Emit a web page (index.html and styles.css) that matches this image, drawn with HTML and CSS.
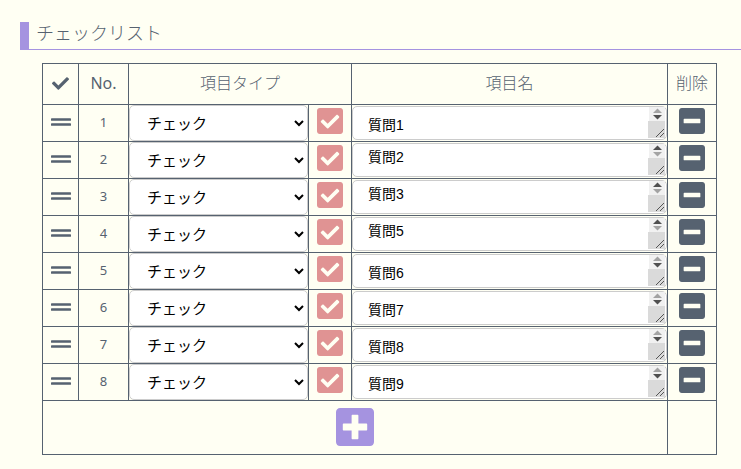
FILE: index.html
```html
<!DOCTYPE html>
<html lang="ja">
<head>
    <meta charset="UTF-8">
    <meta name="viewport" content="width=device-width, initial-scale=1.0">
    <title>チェックリスト</title>
    <link rel="stylesheet" href="styles.css">
</head>
<body>
    <svg class="icon-defs" aria-hidden="true">
        <symbol id="icon-check" viewBox="0 0 512 512"><path d="M173.898 439.404l-166.4-166.4c-9.997-9.997-9.997-26.206 0-36.204l36.203-36.204c9.997-9.998 26.207-9.998 36.204 0L192 312.69 432.095 72.596c9.997-9.997 26.207-9.997 36.204 0l36.203 36.204c9.997 9.997 9.997 26.206 0 36.204l-294.4 294.401c-9.998 9.997-26.207 9.997-36.204-.001z"/></symbol>
        <symbol id="icon-grip" viewBox="0 0 512 512"><path d="M496 288H16c-8.800 0-16 7.200-16 16v32c0 8.800 7.200 16 16 16h480c8.800 0 16-7.200 16-16v-32c0-8.800-7.200-16-16-16zm0-128H16c-8.800 0-16 7.200-16 16v32c0 8.800 7.200 16 16 16h480c8.800 0 16-7.200 16-16v-32c0-8.800-7.200-16-16-16z"/></symbol>
        <symbol id="icon-check-square" viewBox="0 32 448 448"><path d="M400 480H48c-26.51 0-48-21.49-48-48V80c0-26.51 21.49-48 48-48h352c26.51 0 48 21.49 48 48v352c0 26.51-21.49 48-48 48zm-204.686-98.059l184-184c6.248-6.248 6.248-16.379 0-22.627l-22.627-22.627c-6.248-6.248-16.379-6.249-22.628 0L184 302.745l-70.059-70.059c-6.248-6.248-16.379-6.248-22.628 0l-22.627 22.627c-6.248 6.248-6.248 16.379 0 22.627l104 104c6.249 6.25 16.379 6.25 22.628.001z"/></symbol>
        <symbol id="icon-minus-square" viewBox="0 32 448 448"><path d="M400 32H48C21.5 32 0 53.5 0 80v352c0 26.5 21.5 48 48 48h352c26.5 0 48-21.5 48-48V80c0-26.5-21.5-48-48-48zM92 296c-6.600 0-12-5.400-12-12v-56c0-6.600 5.400-12 12-12h264c6.600 0 12 5.400 12 12v56c0 6.600-5.400 12-12 12H92z"/></symbol>
        <symbol id="icon-plus-square" viewBox="0 32 448 448"><path d="M400 32H48C21.500 32 0 53.500 0 80v352c0 26.500 21.500 48 48 48h352c26.500 0 48-21.500 48-48V80c0-26.500-21.500-48-48-48zm-32 252c0 6.600-5.400 12-12 12h-92v92c0 6.600-5.400 12-12 12h-56c-6.600 0-12-5.400-12-12v-92H92c-6.600 0-12-5.400-12-12v-56c0-6.600 5.400-12 12-12h92v-92c0-6.600 5.400-12 12-12h56c6.600 0 12 5.400 12 12v92h92c6.600 0 12 5.400 12 12v56z"/></symbol>
        <!-- 入力欄のスクロール矢印とリサイズつまみ -->
        <symbol id="icon-scroll" viewBox="0 0 17 31">
            <path fill="#f1f1f1" d="M1 0h16v14H1z"/>
            <path fill="#dadada" d="M0 14h17v17H0z"/>
            <path class="arrow-up" d="M5 6l4.500-4.500 4.500 4.500z"/>
            <path class="arrow-down" d="M5 8h9l-4.500 4.500z"/>
            <path fill="none" stroke="#555" d="M8 30l8-8M12 30l4-4"/>
        </symbol>
    </svg>

    <h1 class="section-title">チェックリスト</h1>

    <form class="checklist">
        <table class="item-table">
            <colgroup>
                <col class="col-grip">
                <col class="col-no">
                <col class="col-type">
                <col class="col-icon">
                <col class="col-name">
                <col class="col-delete">
            </colgroup>
            <thead>
                <tr>
                    <th aria-label="並べ替え"><svg class="icon icon-head"><use href="#icon-check"/></svg></th>
                    <th class="no">No.</th>
                    <th colspan="2">項目タイプ</th>
                    <th>項目名</th>
                    <th>削除</th>
                </tr>
            </thead>
            <tbody>
                <tr>
                    <td><svg class="icon icon-grip"><use href="#icon-grip"/></svg></td>
                    <td class="no">1</td>
                    <td class="field"><select class="type-select" aria-label="項目タイプ 1"><option>チェック</option></select></td>
                    <td><svg class="icon icon-type"><use href="#icon-check-square"/></svg></td>
                    <td class="field"><div class="name-box"><textarea class="name-input" aria-label="項目名 1">質問1</textarea><svg class="scroll"><use href="#icon-scroll"/></svg></div></td>
                    <td><button type="button" class="btn-icon" aria-label="削除 1"><svg class="icon icon-delete"><use href="#icon-minus-square"/></svg></button></td>
                </tr>
                <tr>
                    <td><svg class="icon icon-grip"><use href="#icon-grip"/></svg></td>
                    <td class="no">2</td>
                    <td class="field"><select class="type-select" aria-label="項目タイプ 2"><option>チェック</option></select></td>
                    <td><svg class="icon icon-type"><use href="#icon-check-square"/></svg></td>
                    <td class="field"><div class="name-box scrolled"><textarea class="name-input" aria-label="項目名 2">質問2</textarea><svg class="scroll"><use href="#icon-scroll"/></svg></div></td>
                    <td><button type="button" class="btn-icon" aria-label="削除 2"><svg class="icon icon-delete"><use href="#icon-minus-square"/></svg></button></td>
                </tr>
                <tr>
                    <td><svg class="icon icon-grip"><use href="#icon-grip"/></svg></td>
                    <td class="no">3</td>
                    <td class="field"><select class="type-select" aria-label="項目タイプ 3"><option>チェック</option></select></td>
                    <td><svg class="icon icon-type"><use href="#icon-check-square"/></svg></td>
                    <td class="field"><div class="name-box scrolled"><textarea class="name-input" aria-label="項目名 3">質問3</textarea><svg class="scroll"><use href="#icon-scroll"/></svg></div></td>
                    <td><button type="button" class="btn-icon" aria-label="削除 3"><svg class="icon icon-delete"><use href="#icon-minus-square"/></svg></button></td>
                </tr>
                <tr>
                    <td><svg class="icon icon-grip"><use href="#icon-grip"/></svg></td>
                    <td class="no">4</td>
                    <td class="field"><select class="type-select" aria-label="項目タイプ 4"><option>チェック</option></select></td>
                    <td><svg class="icon icon-type"><use href="#icon-check-square"/></svg></td>
                    <td class="field"><div class="name-box scrolled"><textarea class="name-input" aria-label="項目名 4">質問5</textarea><svg class="scroll"><use href="#icon-scroll"/></svg></div></td>
                    <td><button type="button" class="btn-icon" aria-label="削除 4"><svg class="icon icon-delete"><use href="#icon-minus-square"/></svg></button></td>
                </tr>
                <tr>
                    <td><svg class="icon icon-grip"><use href="#icon-grip"/></svg></td>
                    <td class="no">5</td>
                    <td class="field"><select class="type-select" aria-label="項目タイプ 5"><option>チェック</option></select></td>
                    <td><svg class="icon icon-type"><use href="#icon-check-square"/></svg></td>
                    <td class="field"><div class="name-box"><textarea class="name-input" aria-label="項目名 5">質問6</textarea><svg class="scroll"><use href="#icon-scroll"/></svg></div></td>
                    <td><button type="button" class="btn-icon" aria-label="削除 5"><svg class="icon icon-delete"><use href="#icon-minus-square"/></svg></button></td>
                </tr>
                <tr>
                    <td><svg class="icon icon-grip"><use href="#icon-grip"/></svg></td>
                    <td class="no">6</td>
                    <td class="field"><select class="type-select" aria-label="項目タイプ 6"><option>チェック</option></select></td>
                    <td><svg class="icon icon-type"><use href="#icon-check-square"/></svg></td>
                    <td class="field"><div class="name-box"><textarea class="name-input" aria-label="項目名 6">質問7</textarea><svg class="scroll"><use href="#icon-scroll"/></svg></div></td>
                    <td><button type="button" class="btn-icon" aria-label="削除 6"><svg class="icon icon-delete"><use href="#icon-minus-square"/></svg></button></td>
                </tr>
                <tr>
                    <td><svg class="icon icon-grip"><use href="#icon-grip"/></svg></td>
                    <td class="no">7</td>
                    <td class="field"><select class="type-select" aria-label="項目タイプ 7"><option>チェック</option></select></td>
                    <td><svg class="icon icon-type"><use href="#icon-check-square"/></svg></td>
                    <td class="field"><div class="name-box"><textarea class="name-input" aria-label="項目名 7">質問8</textarea><svg class="scroll"><use href="#icon-scroll"/></svg></div></td>
                    <td><button type="button" class="btn-icon" aria-label="削除 7"><svg class="icon icon-delete"><use href="#icon-minus-square"/></svg></button></td>
                </tr>
                <tr>
                    <td><svg class="icon icon-grip"><use href="#icon-grip"/></svg></td>
                    <td class="no">8</td>
                    <td class="field"><select class="type-select" aria-label="項目タイプ 8"><option>チェック</option></select></td>
                    <td><svg class="icon icon-type"><use href="#icon-check-square"/></svg></td>
                    <td class="field"><div class="name-box"><textarea class="name-input" aria-label="項目名 8">質問9</textarea><svg class="scroll"><use href="#icon-scroll"/></svg></div></td>
                    <td><button type="button" class="btn-icon" aria-label="削除 8"><svg class="icon icon-delete"><use href="#icon-minus-square"/></svg></button></td>
                </tr>
            </tbody>
            <tfoot>
                <tr>
                    <td colspan="5"><button type="button" class="btn-icon" aria-label="項目を追加"><svg class="icon icon-add"><use href="#icon-plus-square"/></svg></button></td>
                    <td></td>
                </tr>
            </tfoot>
        </table>
    </form>
</body>
</html>
```
FILE: styles.css
```css
:root {
    --text-color: #566270;
    --accent-color: #a593e0;
    --check-color: #e09393;
    --background-color: #fffff3;
}

* {
    box-sizing: border-box;
}

body {
    margin: 0;
    padding: 22px 0 0 20px;
    background-color: var(--background-color);
    color: var(--text-color);
    font-family: "Noto Sans", "Noto Sans CJK JP", sans-serif;
    font-size: 16px;
}

.icon-defs {
    display: none;
}

.section-title {
    margin: 0;
    padding: 0 8px 4px 7px;
    border-left: 9px solid var(--accent-color);
    border-bottom: 1px solid var(--accent-color);
    font-size: 18px;
    font-weight: 300;
    line-height: 23px;
}

.checklist {
    margin: 13px 24px 0 22px;
}

.item-table {
    width: 100%;
    table-layout: fixed;
    border-collapse: collapse;
    text-align: center;
}

.col-grip {
    width: 36px;
}

.col-no {
    width: 50px;
}

.col-type {
    width: 180px;
}

.col-icon {
    width: 43px;
}

.col-delete {
    width: 49px;
}

th, td {
    padding: 0 0 2px;
    border: 1px solid var(--text-color);
    vertical-align: middle;
}

th {
    height: 41px;
    font-weight: 300;
    line-height: 24px;
}

td {
    height: 37px;
    font-size: 13px;
    line-height: 18px;
}

.no {
    font-weight: 400;
}

.field {
    padding: 0;
}

tfoot td {
    height: 54px;
}

.icon {
    display: block;
    margin: 0 auto;
    fill: currentColor;
}

.icon-head {
    width: 17px;
    height: 17px;
}

.icon-grip {
    width: 20px;
    height: 20px;
}

.icon-type, .icon-delete {
    width: 26px;
    height: 26px;
    margin-bottom: 2px;
}

.icon-type {
    color: var(--check-color);
}

.icon-add {
    width: 38px;
    height: 38px;
    color: var(--accent-color);
}

.btn-icon {
    display: block;
    margin: 0 auto;
    padding: 0;
    border: none;
    background: none;
    color: inherit;
    cursor: pointer;
}

.type-select {
    display: block;
    width: 100%;
    height: 36px;
    padding: 0 1px 2px 13px;
    border: 1px solid #ccc;
    border-radius: 5px;
    background-color: #fff;
    color: #000;
    font-family: "Noto Sans CJK JP", sans-serif;
    font-size: 15px;
}

.name-box {
    position: relative;
    padding: 1px 0;
}

.name-input {
    display: block;
    width: 100%;
    height: 34px;
    padding: 8px 32px 0 15px;
    border: 1px solid #ccc;
    border-radius: 5px;
    background-color: #fff;
    color: #000;
    font-family: "Liberation Sans", "Noto Sans CJK JP", sans-serif;
    font-size: 14px;
    line-height: 20px;
    overflow: hidden;
    resize: none;
}

.scrolled .name-input {
    padding-top: 3px;
}

.scroll {
    position: absolute;
    top: 2px;
    right: 2px;
    width: 17px;
    height: 31px;
    --up: #a3a3a3;
    --down: #505050;
}

.scrolled .scroll {
    --up: #505050;
    --down: #a3a3a3;
}

.arrow-up {
    fill: var(--up);
}

.arrow-down {
    fill: var(--down);
}
```
